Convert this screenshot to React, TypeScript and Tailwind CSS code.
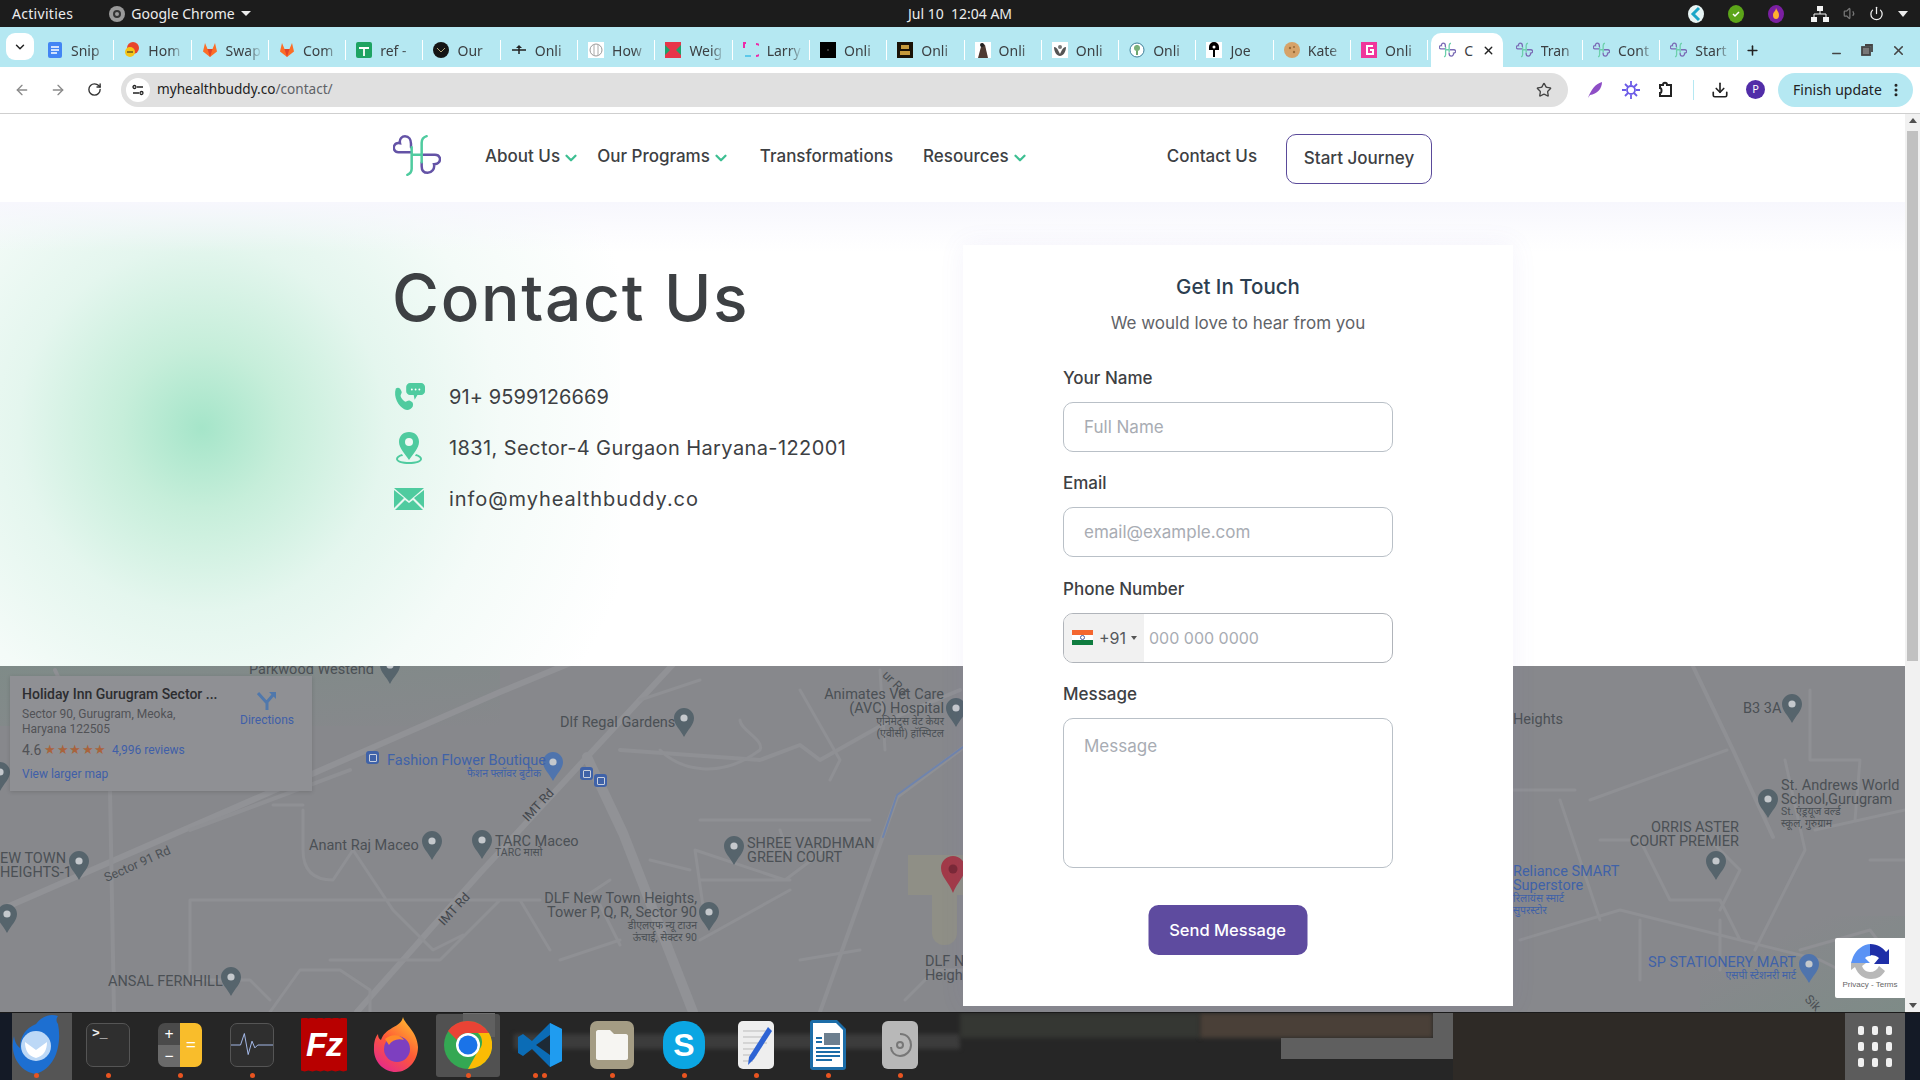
import { ArrowLeft, ArrowRight, ChevronDown, Download, MoreVertical, Plus, RotateCw, Star, X, Minus, Power, Volume1 } from "lucide-react";
import type { ReactNode } from "react";

const poppins = "font-['Inter','Noto_Sans',sans-serif]";
const uiFont = "font-['Noto_Sans','Liberation_Sans',sans-serif]";

const logoPurple = "M78 70H40C28 70 24 58 28 50 32 42 40 42 45 43 42 30 52 22 60 22 72 22 78 32 78 45V55M115 78H150C165 78 168 92 162 100 158 106 150 106 147 106 150 120 140 132 128 132 116 132 110 124 110 112V102";
const logoGreen = "M80 55V120C80 130 75 135 67 138M125 22C115 25 110 32 110 42V100M80 78H110";

const Logo = () => (
  <svg width="48" height="43" viewBox="24 18 144 124" fill="none" strokeLinecap="round" strokeWidth="7.500">
    <path d={logoPurple} stroke="#6453a6" />
    <path d={logoGreen} stroke="#4fcb9f" />
  </svg>
);

const LogoFav = () => (
  <svg width="17" height="16" viewBox="24 18 144 124" fill="none" strokeWidth="11" className="shrink-0">
    <path d={logoPurple} stroke="#7a6bb5" />
    <path d={logoGreen} stroke="#6dd0ac" />
  </svg>
);

const Hf = ({ children, bg = "transparent" }: { children: ReactNode; bg?: string }) => (
  <svg width="16" height="16" viewBox="0 0 16 16" className="shrink-0" style={{ background: bg }}>
    {children}
  </svg>
);

const GitlabFav = () => (
  <Hf>
    <path d="M8 15 1 9.500 3 1l2.500 6h5L13 1l2 8.500z" fill="#fc6d26" />
    <path d="M8 15 5.500 7h5z" fill="#e24329" />
  </Hf>
);

const favicons: ReactNode[] = [
  <Hf key="0"><rect x="1" width="14" height="16" rx="2" fill="#4285f4" /><path d="M4 5h8M4 8h8M4 11h6" stroke="#fff" strokeWidth="1.500" /></Hf>,
  <Hf key="1"><circle cx="9" cy="6" r="6" fill="#e8452c" /><circle cx="6" cy="10" r="5" fill="#f5c518" /><path d="M3 10h6" stroke="#222" /></Hf>,
  <GitlabFav key="2" />,
  <GitlabFav key="3" />,
  <Hf key="4"><rect width="16" height="16" rx="2" fill="#1ea362" /><path d="M3 6h10M8 6v8" stroke="#fff" strokeWidth="1.800" /></Hf>,
  <Hf key="5"><circle cx="8" cy="8" r="8" fill="#151515" /><path d="m4 6 4 4 4-4" stroke="#b5a77a" fill="none" /></Hf>,
  <Hf key="6"><path d="M1 8h14M8 4v8" stroke="#222" strokeWidth="1.500" /><path d="m5 6 3-3 3 3" fill="#222" /></Hf>,
  <Hf key="7"><rect width="16" height="16" fill="#fff" /><circle cx="8" cy="8" r="6" fill="none" stroke="#999" /><path d="M6 3v10M10 3v10" stroke="#aaa" /></Hf>,
  <Hf key="8"><rect width="16" height="16" fill="#e8344a" /><path d="M0 3l5 5-5 5M16 3l-5 5 5 5" fill="#1fa06a" /></Hf>,
  <Hf key="9"><path d="M3 1H1v5M13 2a6 6 0 0 1 0 12" stroke="#ee2aa8" strokeWidth="2" fill="none" /><path d="M2 14h6" stroke="#5cc8ea" strokeWidth="2" /></Hf>,
  <Hf key="10" bg="#000"><circle cx="8" cy="8" r="1" fill="#444" /></Hf>,
  <Hf key="11" bg="#1a1207"><path d="M4 3h8v4H4zM3 9h10v4H3z" fill="#c69a3b" /></Hf>,
  <Hf key="12" bg="#fff"><path d="M7 1 3 16h10L10 3z" fill="#4d3a32" /><circle cx="7" cy="3" r="2" fill="#222" /></Hf>,
  <Hf key="13" bg="#fff"><path d="M2 5c3 0 4 3 6 7 2-4 3-7 6-7 0 5-3 9-6 9s-6-4-6-9z" fill="#555" /><circle cx="8" cy="5" r="2" fill="#777" /></Hf>,
  <Hf key="14"><circle cx="8" cy="8" r="7" fill="#fff" stroke="#3f7f99" /><path d="M8 3v10" stroke="#6da66d" strokeWidth="2" /><circle cx="8" cy="6" r="3" fill="#7ab07a" /></Hf>,
  <Hf key="15" bg="#fff"><path d="M3 5a5 5 0 0 1 10 0v3H9v7H7V8H3z" fill="#000" /><circle cx="8" cy="5" r="1.500" fill="#fff" /></Hf>,
  <Hf key="16"><circle cx="8" cy="8" r="8" fill="#d6a268" /><circle cx="6" cy="6" r="1.200" fill="#9a6a38" /><circle cx="10" cy="10" r="1.200" fill="#9a6a38" /><circle cx="10" cy="5" r="1" fill="#9a6a38" /></Hf>,
  <Hf key="17" bg="#f0359b"><path d="M12 4H6v8h6V8H9" stroke="#fff" strokeWidth="2" fill="none" /></Hf>,
];

const tabs = ["Snip", "Hom", "Swap", "Com", "ref -", "Our", "Onli", "How", "Weig", "Larry", "Onli", "Onli", "Onli", "Onli", "Onli", "Joe", "Kate", "Onli"];

const Tab = ({ icon, text }: { icon: ReactNode; text: string }) => (
  <div className="w-[77.3px] h-[34px] flex items-center shrink-0">
    <div className="flex-1 min-w-0 flex items-center pl-[10px] gap-[8px]">
      {icon}
      <span className="w-[36px] overflow-hidden whitespace-nowrap text-[14px] text-[#3c4043] [mask-image:linear-gradient(to_right,black_60%,transparent)]">{text}</span>
    </div>
    <div className="w-px h-5 bg-white" />
  </div>
);

const TopBar = () => (
  <div className={`${uiFont} h-[27px] bg-[#1c1c1c] text-[#ececec] text-[14px] grid grid-cols-3 items-center px-3 shrink-0`}>
    <div className="flex items-center">
      <span className="tracking-[0.3px]">Activities</span>
      <span className="ml-[36px] w-4 h-4 rounded-full bg-[#9a9a9a] flex items-center justify-center">
        <span className="w-2 h-2 rounded-full border-2 border-[#333]" />
      </span>
      <span className="ml-[6px]">Google Chrome</span>
      <span className="ml-[6px] w-0 h-0 border-x-[5px] border-x-transparent border-t-[5px] border-t-[#ececec]" />
    </div>
    <div className="text-center">Jul 10&nbsp;&nbsp;12:04 AM</div>
    <div className="flex items-center justify-end gap-[22px]">
      <svg width="18" height="20" viewBox="0 0 18 20"><ellipse cx="9" cy="10" rx="8" ry="9" fill="#e8f4f4" /><path d="M12 4 6 10l6 6" stroke="#1aa6c8" strokeWidth="3" fill="none" /></svg>
      <svg width="18" height="20" viewBox="0 0 18 20"><ellipse cx="9" cy="10" rx="8" ry="9" fill="#5ca519" /><path d="m6 10 2 2 4-4" stroke="#fff" strokeWidth="1.500" fill="none" /></svg>
      <svg width="18" height="20" viewBox="0 0 18 20"><ellipse cx="9" cy="10" rx="8" ry="9" fill="#7b1fa2" /><path d="M9 4c1 3 3 4 3 7a3 4 0 0 1-6 0c0-3 3-4 3-7z" fill="#ffb02e" /></svg>
      <svg width="18" height="16" viewBox="0 0 18 16" className="ml-[4px]" fill="#f2f2f2"><rect x="6" y="0" width="6" height="5" /><rect x="0" y="11" width="6" height="5" /><rect x="12" y="11" width="6" height="5" /><path d="M9 5v3M3 11V8h12v3" stroke="#f2f2f2" fill="none" /></svg>
      <Volume1 size={15} className="text-[#777] -ml-[8px]" />
      <Power size={15} className="text-[#f2f2f2] -ml-[11px]" />
      <span className="-ml-[8px] w-0 h-0 border-x-[5px] border-x-transparent border-t-[6px] border-t-[#ececec]" />
    </div>
  </div>
);

const TabStrip = () => (
  <div className={`${uiFont} h-[40px] bg-[#b5e8f2] flex items-end shrink-0 pl-[6px] pr-3`}>
    <div className="w-[28px] h-[27px] mb-[7px] rounded-[9px] bg-white flex items-center justify-center">
      <ChevronDown size={14} strokeWidth={2.500} className="text-[#222]" />
    </div>
    <div className="w-[3px]" />
    {tabs.map((t, i) => (
      <Tab key={i} icon={favicons[i]} text={t} />
    ))}
    <div className="w-[71.3px] mx-[3px] h-[34px] bg-white rounded-t-[10px] flex items-center pl-[8px] shrink-0">
      <LogoFav />
      <span className="ml-[8px] text-[14px] text-[#3c4043] w-[10px] overflow-hidden">C</span>
      <X size={13} strokeWidth={2.500} className="ml-[8px] text-[#222]" />
    </div>
    <Tab icon={<LogoFav />} text="Tran" />
    <Tab icon={<LogoFav />} text="Cont" />
    <Tab icon={<LogoFav />} text="Start" />
    <div className="h-[34px] flex items-center ml-[7px]">
      <Plus size={15} strokeWidth={2.500} className="text-[#222]" />
    </div>
    <div className="flex-1" />
    <div className="h-[34px] flex items-center gap-[18px] text-[#444] pr-[2px]">
      <Minus size={13} strokeWidth={2.500} className="mt-[7px]" />
      <svg width="12" height="12" viewBox="0 0 12 12" fill="none" stroke="#444" strokeWidth="1.800"><rect x="1" y="3" width="8" height="8" fill="#777" /><path d="M4 1h7v7" /></svg>
      <X size={15} strokeWidth={2.500} />
    </div>
  </div>
);

const Toolbar = () => (
  <div className={`${uiFont} h-[47px] bg-white border-b border-[#cfcfcf] flex items-center pl-[14px] pr-[7px] shrink-0 pb-px`}>
    <ArrowLeft size={16} strokeWidth={2} className="text-[#8a8a8a]" />
    <ArrowRight size={16} strokeWidth={2} className="text-[#8a8a8a] ml-[20px]" />
    <RotateCw size={15} strokeWidth={2.200} className="text-[#333] ml-[21px]" />
    <div className="ml-[19px] flex-1 h-[34px] rounded-full bg-[#e0e0e0] flex items-center pl-[5px] pr-[16px]">
      <span className="w-[24px] h-[24px] rounded-full bg-white flex items-center justify-center">
        <svg width="12" height="12" viewBox="0 0 12 12" fill="none" stroke="#222" strokeWidth="1.300"><path d="M5 3h6M1 9h6" /><circle cx="2.500" cy="3" r="1.500" /><circle cx="9.500" cy="9" r="1.500" /></svg>
      </span>
      <span className="ml-[7px] text-[13.600px] text-[#222]">myhealthbuddy.co<span className="text-[#5f6368]">/contact/</span></span>
      <div className="flex-1" />
      <Star size={16} strokeWidth={2} className="text-[#444]" />
    </div>
    <svg width="18" height="18" viewBox="0 0 18 18" className="ml-[18px]"><path d="M2 17C5 9 9 3 16 1c0 7-5 12-12 13z" fill="#8e4ec6" /></svg>
    <svg width="18" height="18" viewBox="0 0 18 18" className="ml-[18px]" stroke="#6c5ce7" strokeWidth="1.800" fill="none"><circle cx="9" cy="9" r="4" /><path d="M9 0v4M9 14v4M0 9h4M14 9h4M3 3l3 3M12 12l3 3M15 3l-3 3M6 12l-3 3" /></svg>
    <svg width="16" height="18" viewBox="0 0 16 18" className="ml-[18px]" fill="none" stroke="#222" strokeWidth="2"><path d="M2 4h3c0-3 4-3 4 0h4v11H2v-3c2 0 2-5 0-5z" /></svg>
    <div className="w-px h-5 bg-[#b5e8f2] ml-[19px]" />
    <Download size={18} strokeWidth={2.200} className="text-[#222] ml-[17px]" />
    <span className="ml-[17px] w-[19px] h-[19px] rounded-full bg-[#512da8] text-white text-[11px] flex items-center justify-center">P</span>
    <div className="ml-[13px] w-[135px] h-[34px] rounded-full bg-[#b5e8f2] flex items-center pl-[15px] text-[14px] text-[#222]">
      Finish update
      <MoreVertical size={16} strokeWidth={2.500} className="ml-[6px]" />
    </div>
  </div>
);

const NavLink = ({ label, arrow, cls }: { label: string; arrow?: boolean; cls: string }) => (
  <div className={`flex items-center mb-[4px] ${cls}`}>
    <span className="text-[17px] font-[450] text-[#3d4043] whitespace-nowrap">{label}</span>
    {arrow && <ChevronDown size={18} strokeWidth={3} className="ml-[2px] mt-[2px] text-[#3dbf92]" />}
  </div>
);

const Header = () => (
  <header className="h-[88px] bg-white flex items-start pl-[393px] shrink-0">
    <div className="mt-[20px]"><Logo /></div>
    <div className="mt-[20px] flex items-center">
      <NavLink label="About Us" arrow cls="ml-[44px]" />
      <NavLink label="Our Programs" arrow cls="ml-[17px]" />
      <NavLink label="Transformations" cls="ml-[30px]" />
      <NavLink label="Resources" arrow cls="ml-[30px]" />
      <NavLink label="Contact Us" cls="ml-[138px]" />
      <div className="ml-[29px] w-[146px] h-[50px] rounded-[10px] border border-[#5a4a9a] flex items-center justify-center text-[17px] font-[450] text-[#3d4043]">
        Start Journey
      </div>
    </div>
  </header>
);

const PhoneIcon = () => (
  <svg width="34" height="30" viewBox="0 0 34 30" fill="#4fcb9f">
    <path d="M3 6c3-2 5 0 6 3 1 2-1 3-1 5 1 3 3 5 5 6 2 0 3-2 5-1 3 1 4 3 3 6-2 3-5 5-9 3C6 25 0 15 3 6z" />
    <path d="M18 0h12c2 0 4 2 4 4v5c0 2-2 4-4 4h-4l-3 5-1-5h-4c-2 0-4-2-4-4V4c0-2 2-4 4-4z" />
    <circle cx="20" cy="7" r="1" fill="#fff" /><circle cx="24" cy="7" r="1" fill="#fff" /><circle cx="28" cy="7" r="1" fill="#fff" />
  </svg>
);

const PinIcon = () => (
  <svg width="28" height="32" viewBox="0 0 28 32" fill="#4fcb9f">
    <path d="M14 0c6 0 10 4 10 10 0 6-6 12-10 18C10 22 4 16 4 10 4 4 8 0 14 0z" />
    <circle cx="14" cy="10" r="4" fill="#eef9f4" />
    <path d="M7 22c-4 1-6 3-6 5 0 3 6 5 13 5s13-2 13-5c0-2-2-4-6-5l-1 2c3 0 5 2 5 3 0 2-5 3-11 3S3 29 3 27c0-1 2-3 5-3z" />
  </svg>
);

const MailIcon = () => (
  <svg width="30" height="22" viewBox="0 0 30 22" fill="#4fcb9f">
    <path d="M0 0h30L15 13z" /><path d="M0 2v18l10-10zM30 2v18L20 10z" /><path d="M1 22l10-10 4 3 4-3 10 10z" />
  </svg>
);

const ContactRow = ({ icon, text, cls }: { icon: ReactNode; text: string; cls: string }) => (
  <div className="flex items-center h-[51px]">
    <div className="w-[32px] flex justify-center">{icon}</div>
    <span className={`ml-[24px] text-[20px] text-[#3d4043] ${cls}`}>{text}</span>
  </div>
);

const Hero = () => (
  <section className="h-[464px] shrink-0 pl-[393px] pt-[57px] bg-[linear-gradient(to_bottom,#f7f7fd,rgba(255,255,255,0)_50px),radial-gradient(circle_at_202px_226px,#a5e5c9_0%,#c6eeda_14%,#e4f6ee_32%,#f4fbf8_52%,#ffffff_78%)] bg-no-repeat [background-size:100%_100%,620px_620px]">
    <h1 className="-ml-[1px] text-[64px] leading-[78px] font-medium tracking-[1.700px] text-[#3d4043]">Contact Us</h1>
    <div className="mt-[34px] flex flex-col">
      <ContactRow icon={<PhoneIcon />} text="91+ 9599126669" cls="tracking-[0.100px]" />
      <ContactRow icon={<PinIcon />} text="1831, Sector-4 Gurgaon Haryana-122001" cls="tracking-[0.400px]" />
      <ContactRow icon={<MailIcon />} text="info@myhealthbuddy.co" cls="tracking-[0.950px]" />
    </div>
  </section>
);

const inputCls = "w-full h-[50px] rounded-[10px] border border-[#b9c0c7] px-[20px] text-[17px] text-[#3d4043] placeholder:text-[#a8acb3] outline-none bg-white";

const Field = ({ label, children }: { label: string; children: ReactNode }) => (
  <div className="mb-[19.400px]">
    <label className="block h-[24px] mb-[12px] text-[17px] leading-[25px] font-[450] text-[#3d4043]">{label}</label>
    {children}
  </div>
);

const FormCard = () => (
  <div className="absolute left-[963px] top-[131px] w-[550px] h-[761px] bg-white shadow-[0_0_24px_rgba(110,100,200,0.08)] pt-[27px]">
    <h2 className="text-center text-[20.500px] leading-[30px] font-medium text-[#2c3e50]">Get In Touch</h2>
    <p className="mt-[9px] text-center text-[17px] leading-[24px] text-[#5f6368]">We would love to hear from you</p>
    <form className="mt-[31px] ml-[100px] w-[330px]">
      <Field label="Your Name"><input className={inputCls} placeholder="Full Name" /></Field>
      <Field label="Email"><input className={inputCls} placeholder="email@example.com" /></Field>
      <Field label="Phone Number">
        <div className="w-full h-[50px] rounded-[10px] border border-[#b0b4ba] flex items-center overflow-hidden">
          <div className="w-[80px] h-full bg-[#f1f1f1] flex items-center pl-[8px] shrink-0">
            <svg width="21" height="15" viewBox="0 0 21 15">
              <rect width="21" height="5" fill="#f4662f" /><rect y="5" width="21" height="5" fill="#fff" /><rect y="10" width="21" height="5" fill="#0f7c3f" /><circle cx="10.500" cy="7.500" r="2" fill="none" stroke="#4a5aa0" />
            </svg>
            <span className="ml-[6px] text-[16px] text-[#55585c]">+91</span>
            <span className="ml-[5px] w-0 h-0 border-x-[3px] border-x-transparent border-t-[4px] border-t-[#555]" />
          </div>
          <input className="flex-1 min-w-0 h-full pl-[5px] text-[16px] placeholder:text-[#a8acb3] outline-none" placeholder="000 000 0000" />
        </div>
      </Field>
      <Field label="Message">
        <textarea className="block w-full h-[150px] rounded-[10px] border border-[#b9c0c7] px-[20px] py-[15px] text-[17px] placeholder:text-[#a8acb3] outline-none resize-none" placeholder="Message" />
      </Field>
      <button type="button" className="block mx-auto mt-[37px] -translate-x-[0.500px] w-[159px] h-[50px] rounded-[10px] bg-[#5e4b9f] text-white text-[16.500px] font-medium">
        Send Message
      </button>
    </form>
  </div>
);

const grey = "text-[#4b5055]";
const blue = "text-[#3f62a8]";
const big = "text-[14.500px] leading-[14px]";
const small = "text-[10.500px] leading-[11.500px]";
const mapLabels: { t: string; cls: string }[] = [
  { t: "Parkwood Westend", cls: `${big} left-[249px] -top-[3px] ${grey}` },
  { t: "Fashion Flower Boutique", cls: `${big} left-[387px] top-[88px] ${blue}` },
  { t: "फैशन फ्लॉवर बुटीक", cls: `${small} right-[1364px] top-[102px] text-right ${blue}` },
  { t: "EW TOWN\nHEIGHTS-1", cls: `${big} left-0 top-[186px] ${grey}` },
  { t: "Anant Raj Maceo", cls: `${big} left-[309px] top-[173px] ${grey}` },
  { t: "TARC Maceo", cls: `${big} left-[495px] top-[169px] ${grey}` },
  { t: "TARC मासो", cls: `${small} left-[495px] top-[181px] ${grey}` },
  { t: "Dlf Regal Gardens", cls: `${big} left-[560px] top-[50px] ${grey}` },
  { t: "Animates Vet Care\n(AVC) Hospital", cls: `${big} right-[961px] top-[22px] text-right ${grey}` },
  { t: "एनिमेट्स वेट केयर\n(एवीसी) हॉस्पिटल", cls: `${small} right-[961px] top-[50px] text-right ${grey}` },
  { t: "SHREE VARDHMAN\nGREEN COURT", cls: `${big} left-[747px] top-[171px] ${grey}` },
  { t: "DLF New Town Heights,\nTower P, Q, R, Sector 90", cls: `${big} right-[1208px] top-[226px] text-right ${grey}` },
  { t: "डीएलएफ न्यू टाउन\nऊंचाई, सेक्टर 90", cls: `${small} right-[1208px] top-[254px] text-right ${grey}` },
  { t: "DLF N\nHeigh", cls: `${big} left-[925px] top-[289px] ${grey}` },
  { t: "Heights", cls: `${big} left-[1513px] top-[47px] ${grey}` },
  { t: "B3 3A", cls: `${big} left-[1743px] top-[36px] ${grey}` },
  { t: "St. Andrews World\nSchool,Gurugram", cls: `${big} left-[1781px] top-[113px] ${grey}` },
  { t: "St. एंड्रयूज वर्ल्ड\nस्कूल, गुरुग्राम", cls: `${small} left-[1781px] top-[140px] ${grey}` },
  { t: "ORRIS ASTER\nCOURT PREMIER", cls: `${big} right-[166px] top-[155px] text-right ${grey}` },
  { t: "Reliance SMART\nSuperstore", cls: `${big} left-[1513px] top-[199px] ${blue}` },
  { t: "रिलायंस स्मार्ट\nसुपरस्टोर", cls: `${small} left-[1513px] top-[227px] ${blue}` },
  { t: "SP STATIONERY MART", cls: `${big} right-[109px] top-[290px] ${blue}` },
  { t: "एसपी स्टेशनरी मार्ट", cls: `${small} right-[109px] top-[304px] ${blue}` },
  { t: "ANSAL FERNHILL", cls: `${big} left-[108px] top-[309px] ${grey}` },
];

const mapPins: { cls: string; color?: string }[] = [
  { cls: "left-[380px] -top-[11px]" },
  { cls: "left-[69px] top-[185px]" },
  { cls: "-left-[10px] top-[96px]" },
  { cls: "-left-[3px] top-[238px]" },
  { cls: "left-[422px] top-[165px]" },
  { cls: "left-[472px] top-[164px]" },
  { cls: "left-[674px] top-[42px]" },
  { cls: "left-[946px] top-[32px]" },
  { cls: "left-[724px] top-[170px]" },
  { cls: "left-[699px] top-[236px]" },
  { cls: "left-[1782px] top-[28px]" },
  { cls: "left-[1706px] top-[185px]" },
  { cls: "left-[221px] top-[301px]" },
  { cls: "left-[1758px] top-[123px]" },
  { cls: "left-[543px] top-[86px]", color: "#4f74ad" },
  { cls: "left-[1799px] top-[288px]", color: "#4f74ad" },
];

const MapPin = ({ cls, color = "#56646c" }: { cls: string; color?: string }) => (
  <svg width="20" height="29" viewBox="0 0 20 29" className={`absolute ${cls}`}>
    <path d="M10 0c5.500 0 10 4.500 10 10 0 7-6 11-10 19C6 21 0 17 0 10 0 4.500 4.500 0 10 0z" fill={color} />
    <circle cx="10" cy="10" r="3.600" fill="#c4c8cc" />
  </svg>
);

const BusIcon = ({ cls }: { cls: string }) => (
  <span className={`absolute w-[13px] h-[13px] rounded-[3px] bg-[#3f62a8] flex items-center justify-center ${cls}`}>
    <span className="w-[8px] h-[8px] rounded-[1px] border border-[#c8cfdc]" />
  </span>
);

const MapRoads = () => (
  <svg className="absolute inset-0" width="1905" height="346" viewBox="0 666 1905 346" fill="none" stroke="#8f9094" strokeLinejoin="round" strokeLinecap="round">
    <path strokeWidth="6" stroke="#919296" d="M0 910 500 692 585 657" />
    <path strokeWidth="6" stroke="#919296" d="M357 1012 480 873 587 757 677 660" />
    <path strokeWidth="10" stroke="#919296" d="M587 757 623 833 693 1012" />
    <path strokeWidth="4" d="M820 1012 897 797M897 797 1000 720M1690 660 1733 750 1773 837" />
    <path strokeWidth="4" d="M55 670 110 790M110 790 114 1012M190 830 350 770M620 750 760 760 800 745 820 760 900 715 960 690" />
    <path strokeWidth="3" d="M303 805h-30M303 810v40c0 20 10 30 30 30l20-30 40 60 40 40 30-15M190 900h350M190 900v80h60l20 20M330 960h110l60-60M520 900l30 50M270 1012 300 970h40l30 20v22" />
    <path strokeWidth="3" d="M640 700 700 680M660 750c20 20 60 30 100 0 5-10-20-20-20-30M700 820h170M695 850l90 30 40-30M700 880h90M695 850l10 70M700 940l90-50M650 860l40 10M580 900l30-20M600 905l20 40M560 960l60-20M780 830l10 30M800 960l60-10M800 690l40 70-10 20M880 670l5 80M905 1000l30-30h30" />
    <path strokeWidth="3" d="M1590 800 1727 750M1575 790h-90M1560 800l40 120M1520 940l100-30 200 50 60 30M1600 840h40l30 60h50l20 40M1700 830l40 40-20 40M1785 760l20 90-50 100M1815 830l90-20M1870 860h35M1810 690v70h50l-5 60M1640 920v60M1720 920v50M1800 950l70-20 30 40" />
    <path stroke="#6f84ad" strokeWidth="2" d="M883 837 897 795 963 747" />
  </svg>
);

const InfoCard = () => (
  <div className="font-['Roboto',sans-serif] absolute left-[10px] top-[10px] w-[302px] h-[115px] bg-[#8f9094] shadow-[0_1px_4px_rgba(0,0,0,0.15)] flex pl-[12px] pt-[8px]">
    <div className="w-[212px] shrink-0">
      <div className="text-[14px] leading-[20px] font-medium text-[#2c2d30] whitespace-nowrap">Holiday Inn Gurugram Sector ...</div>
      <div className="mt-[3px] text-[12px] leading-[15px] text-[#515256]">Sector 90, Gurugram, Meoka,<br />Haryana 122505</div>
      <div className="mt-[3px] flex items-center h-[20px]">
        <span className="text-[14px] text-[#515256]">4.6</span>
        <span className="ml-[3px] text-[12.500px] tracking-[0.5px] text-[#a9633c]">★★★★★</span>
        <span className="ml-[5px] text-[12px] text-[#3f5fa8]">4,996 reviews</span>
      </div>
      <div className="mt-[5px] text-[12px] text-[#3f5fa8]">View larger map</div>
    </div>
    <div className="flex flex-col items-center ml-[3px] w-[60px]">
      <svg width="20" height="20" viewBox="0 0 20 20" className="mt-[6px]" fill="none" stroke="#5078ac" strokeWidth="3"><path d="M1 3l9 10v7M10 12 16 5" /><path d="M12 2h7v7z" fill="#5078ac" stroke="none" /></svg>
      <span className="mt-[1px] text-[12px] text-[#3f5fa8]">Directions</span>
    </div>
  </div>
);

const Recaptcha = () => (
  <div className="absolute right-0 top-[272px] w-[70px] h-[60px] bg-white rounded-l-[2px] flex flex-col items-center pt-[6px]">
    <svg width="38" height="38" viewBox="0 0 38 38">
      <path d="M20 0C12 0 5 6 2 13l-2 6h19l-5-5c2-2 4-2 6-2z" fill="#5a93f5" />
      <path d="M19 0c8 0 13 4 16 8l3-3v15H23l5-6c-2-2-5-3-9-3z" fill="#1f2fa8" />
      <path d="M0 19v7l4-3c3 8 9 12 16 12s11-3 14-8l-6-5c-2 4-5 6-9 6-4 0-7-3-8-6l4-3z" fill="#b8b8b8" />
    </svg>
    <span className="font-['Liberation_Sans',sans-serif] text-[8px] leading-[10px] text-[#666] -mt-[2px] whitespace-nowrap">Privacy - Terms</span>
  </div>
);

const GoogleMap = () => (
  <section className="relative flex-1 overflow-hidden bg-[#87888c]">
    <div className="absolute left-0 top-0 w-[500px] h-[60px] bg-[linear-gradient(to_bottom_right,#7f8b88,transparent)]" />
    <div className="absolute left-[1700px] top-[250px] w-[205px] h-[96px] bg-[linear-gradient(to_bottom_right,transparent_30%,#7e8b87)]" />
    <div className="absolute left-[908px] top-[189px] w-[55px] h-[40px] bg-[#8f8f86]" />
    <div className="absolute left-[932px] top-[229px] w-[25px] h-[50px] rounded-b-[12px] bg-[#8f8f86]" />
    <MapRoads />
    {mapPins.map((p, i) => (
      <MapPin key={i} cls={p.cls} color={p.color} />
    ))}
    <svg width="24" height="37" viewBox="0 0 24 37" className="absolute left-[941px] top-[190px]">
      <path d="M12 0c6.500 0 12 5 12 12 0 9-8 14-12 25C8 26 0 21 0 12 0 5 5.500 0 12 0z" fill="#a23a48" />
      <circle cx="12" cy="13" r="4.500" fill="#7a2836" />
    </svg>
    <BusIcon cls="left-[366px] top-[85px]" />
    <BusIcon cls="left-[580px] top-[101px]" />
    <BusIcon cls="left-[594px] top-[108px]" />
    <div className="font-['Roboto','Noto_Sans',sans-serif]">
      {mapLabels.map((l, i) => (
        <div key={i} className={`absolute whitespace-pre-line ${l.cls}`}>{l.t}</div>
      ))}
      <div className="absolute left-[102px] top-[189px] -rotate-[24deg] text-[12.500px] text-[#4b5055]">Sector 91 Rd</div>
      <div className="absolute left-[519px] top-[130px] -rotate-[47deg] text-[12.500px] text-[#43474c]">IMT Rd</div>
      <div className="absolute left-[435px] top-[234px] -rotate-[47deg] text-[12.500px] text-[#43474c]">IMT Rd</div>
      <div className="absolute left-[880px] top-[8px] rotate-[45deg] text-[12.500px] text-[#4b5055]">ur Rd</div>
      <div className="absolute left-[1804px] top-[328px] rotate-[45deg] text-[12.500px] text-[#4b5055]">Sik</div>
    </div>
    <InfoCard />
    <Recaptcha />
  </section>
);

const Scrollbar = () => (
  <div className="w-[15px] bg-[#f1f1f1] flex flex-col items-center shrink-0">
    <span className="mt-[4px] w-0 h-0 border-x-[4px] border-x-transparent border-b-[5px] border-b-[#505050]" />
    <div className="mt-[8px] w-[11px] h-[530px] bg-[#c1c1c1]" />
    <div className="flex-1" />
    <span className="mb-[4px] w-0 h-0 border-x-[4px] border-x-transparent border-t-[5px] border-t-[#505050]" />
  </div>
);

const Thunderbird = () => (
  <svg width="50" height="62" viewBox="0 0 50 62">
    <path d="M25 10c8-10 16-10 22-8-2 3-2 5 0 8 4 20-2 44-22 50C8 58-2 40 3 22c1 8 4 10 6 12C9 22 15 14 25 10z" fill="#1d6fd1" />
    <circle cx="25" cy="32" r="15" fill="#bcd8f6" />
    <path d="M14 28l11 8 11-8c0 8-3 14-11 16-8-2-11-8-11-16z" fill="#fff" />
  </svg>
);

const Terminal = () => (
  <div className="w-[44px] h-[44px] rounded-[7px] bg-[#2f2f2f] border border-[#555] pl-[5px] pt-[3px] font-['Liberation_Mono',monospace] text-[13px] leading-[14px] font-bold text-[#eee]">&gt;_</div>
);

const Calc = () => (
  <div className="w-[44px] h-[44px] rounded-[7px] overflow-hidden flex">
    <div className="w-[22px] flex flex-col">
      <div className="h-[22px] bg-[#4a4a4a] text-white text-[16px] leading-[22px] text-center">+</div>
      <div className="h-[22px] bg-[#6a6a6a] text-white text-[16px] leading-[22px] text-center">−</div>
    </div>
    <div className="w-[22px] bg-[#f9bd2b] text-white text-[18px] flex items-center justify-center">=</div>
  </div>
);

const Sysmon = () => (
  <div className="w-[44px] h-[44px] rounded-[7px] bg-[#2f2f2f] border border-[#555] flex items-center">
    <svg width="44" height="30" viewBox="0 0 44 30" fill="none" stroke="#a9bff0" strokeWidth="1"><path d="M0 15h10l4-12 4 22 4-14 3 7 3-3h16" /></svg>
  </div>
);

const FileZilla = () => (
  <div className="w-[46px] h-[54px] bg-[#b80000] flex items-center justify-center font-['Liberation_Sans',sans-serif] italic font-bold text-[34px] tracking-[-1px] text-white [clip-path:polygon(0_2%,8%_0,16%_2%,25%_0,33%_2%,42%_0,50%_2%,58%_0,67%_2%,75%_0,84%_2%,92%_0,100%_2%,100%_98%,92%_100%,84%_98%,75%_100%,67%_98%,58%_100%,50%_98%,42%_100%,33%_98%,25%_100%,16%_98%,8%_100%,0_98%)]">Fz</div>
);

const Firefox = () => (
  <svg width="46" height="56" viewBox="0 0 46 56">
    <defs><linearGradient id="ff" x1="0.800" y1="0" x2="0.200" y2="1"><stop offset="0" stopColor="#ffbd2e" /><stop offset="0.500" stopColor="#ff5a36" /><stop offset="1" stopColor="#e3278f" /></linearGradient></defs>
    <path d="M30 0c2 8 14 14 15 30 0 14-10 25-22 25S0 45 1 30c0-6 2-11 4-13 0 3 1 5 3 6 2-6 6-9 11-12 6-3 10-6 11-11z" fill="url(#ff)" />
    <circle cx="24" cy="32" r="13" fill="#7d3fc0" />
    <path d="M12 22c5-4 14-6 19 1-6-2-12 0-15 5z" fill="#ff8a2b" />
  </svg>
);

const Chrome = () => (
  <svg width="48" height="48" viewBox="0 0 48 48">
    <circle cx="24" cy="24" r="24" fill="#34a853" />
    <path d="M24 0a24 24 0 0 1 21 12H24a12 12 0 0 0-11 7L4 10A24 24 0 0 1 24 0z" fill="#ea4335" />
    <path d="M45 12a24 24 0 0 1-21 36l10-18a12 12 0 0 0 0-18z" fill="#fbbc04" />
    <circle cx="24" cy="24" r="12" fill="#fff" /><circle cx="24" cy="24" r="9.500" fill="#1a73e8" />
  </svg>
);

const VSCode = () => (
  <svg width="44" height="44" viewBox="0 0 44 44">
    <path d="M32 0l12 6v32l-12 6L14 26 5 33l-5-3V14l5-3 9 7z" fill="#0b6cb6" />
    <path d="M32 0l12 6v32l-12 6z" fill="#1f9cf0" />
    <path d="M32 12 18 22l14 10z" fill="#1d2a36" />
  </svg>
);

const Files = () => (
  <div className="w-[44px] h-[48px] rounded-[7px] bg-[#a49c84] flex items-center justify-center">
    <svg width="32" height="30" viewBox="0 0 32 30"><path d="M2 0h12l4 4h12c1 0 2 1 2 2v22c0 1-1 2-2 2H2c-1 0-2-1-2-2V2c0-1 1-2 2-2z" fill="#f6f5f2" /></svg>
  </div>
);

const Skype = () => (
  <div className="w-[42px] h-[48px] rounded-[20px] bg-[#0ba6e3] flex items-center justify-center font-['Liberation_Sans',sans-serif] font-bold text-[32px] text-white">S</div>
);

const Editor = () => (
  <svg width="36" height="48" viewBox="0 0 36 48">
    <rect width="36" height="48" rx="5" fill="#eeeeee" />
    <path d="M5 10h24M5 16h24M5 22h24M5 28h16M5 34h14M5 40h10" stroke="#bbb" />
    <path d="M30 6l4 4-18 28-6 6 1-8z" fill="#2d63d4" />
  </svg>
);

const Writer = () => (
  <svg width="36" height="50" viewBox="0 0 36 50">
    <path d="M0 3c0-2 1-3 3-3h24l9 9v38c0 2-1 3-3 3H3c-2 0-3-1-3-3z" fill="#1c6da8" />
    <path d="M3 3h23l7 7v37H3z" fill="#fff" />
    <rect x="14" y="13" width="16" height="12" fill="#6d7f8f" />
    <path d="M6 18h6M6 22h6M6 28h24M6 32h24M6 36h24M6 40h16" stroke="#1c6da8" strokeWidth="2" />
  </svg>
);

const Disk = () => (
  <div className="w-[36px] h-[48px] rounded-[6px] bg-[#b8b8b8] flex items-center justify-center">
    <svg width="28" height="28" viewBox="0 0 28 28" fill="none" stroke="#777" strokeWidth="2"><circle cx="14" cy="14" r="3" /><path d="M14 3c8 0 11 6 11 11 0 6-5 11-11 11-5 0-9-4-9-9" /></svg>
  </div>
);

const dockApps: { icon: ReactNode; dots: number; active?: boolean }[] = [
  { icon: <Thunderbird />, dots: 1 },
  { icon: <Terminal />, dots: 1 },
  { icon: <Calc />, dots: 1 },
  { icon: <Sysmon />, dots: 1 },
  { icon: <FileZilla />, dots: 0 },
  { icon: <Firefox />, dots: 0 },
  { icon: <Chrome />, dots: 1, active: true },
  { icon: <VSCode />, dots: 2 },
  { icon: <Files />, dots: 1 },
  { icon: <Skype />, dots: 1 },
  { icon: <Editor />, dots: 1 },
  { icon: <Writer />, dots: 1 },
  { icon: <Disk />, dots: 1 },
];

const Dock = () => (
  <footer className="relative h-[68px] bg-[#262626] flex shrink-0 overflow-hidden border-t border-[#1a1a1a]">
    <div className="absolute left-0 top-0 w-[12px] h-full bg-[#141a26]" />
    <div className="absolute left-[12px] top-0 w-[60px] h-full bg-[#555555]" />
    <div className="absolute left-[514px] top-[21px] w-[446px] h-[15px] blur-[2px] bg-[#3c3c3c]" />
    <div className="absolute left-[463px] top-0 w-[32px] h-[24px] bg-[#6e6e6e]" />
    <div className="absolute left-[960px] top-0 w-[240px] h-[25px] blur-[2px] bg-[#353733]" />
    <div className="absolute left-[1200px] top-0 w-[233px] h-[25px] blur-[2px] bg-[#4a4038]" />
    <div className="absolute left-[1281px] top-[25px] w-[172px] h-[21px] bg-[#5f5f5f]" />
    <div className="absolute left-[1433px] top-0 w-[20px] h-[25px] bg-[#5f5f5f]" />
    <div className="absolute left-[1453px] top-0 w-[392px] h-full bg-[#2e2a26]" />
    {dockApps.map((a, i) => (
      <div key={i} className="relative w-[72px] h-full flex items-center justify-center shrink-0">
        {a.active && <div className="absolute left-[4px] top-[1px] w-[64px] h-[63px] rounded-[3px] bg-[#5c5c5c]/80" />}
        <div className="relative pb-[4px]">{a.icon}</div>
        {a.dots > 0 && (
          <div className="absolute bottom-[2px] flex gap-[4px]">
            {Array.from({ length: a.dots }).map((_, d) => (
              <span key={d} className="w-[5px] h-[5px] rounded-full bg-[#e95420]" />
            ))}
          </div>
        )}
      </div>
    ))}
    <div className="flex-1" />
    <div className="relative w-[60px] h-full bg-[#5c5c5c] grid grid-cols-3 gap-x-[6px] gap-y-[7px] content-center justify-center justify-items-center px-[12px]">
      {Array.from({ length: 9 }).map((_, i) => (
        <span key={i} className="w-[6px] h-[9px] rounded-[2px] bg-[#f0f0f0]" />
      ))}
    </div>
    <div className="relative w-[15px] h-full bg-[#141a26]" />
  </footer>
);

export default function App() {
  return (
    <div className="w-[1920px] h-[1080px] flex flex-col overflow-hidden bg-white">
      <TopBar />
      <TabStrip />
      <Toolbar />
      <div className="flex-1 min-h-0 flex">
        <main className={`${poppins} relative w-[1905px] flex flex-col`}>
          <Header />
          <Hero />
          <GoogleMap />
          <FormCard />
        </main>
        <Scrollbar />
      </div>
      <Dock />
    </div>
  );
}
